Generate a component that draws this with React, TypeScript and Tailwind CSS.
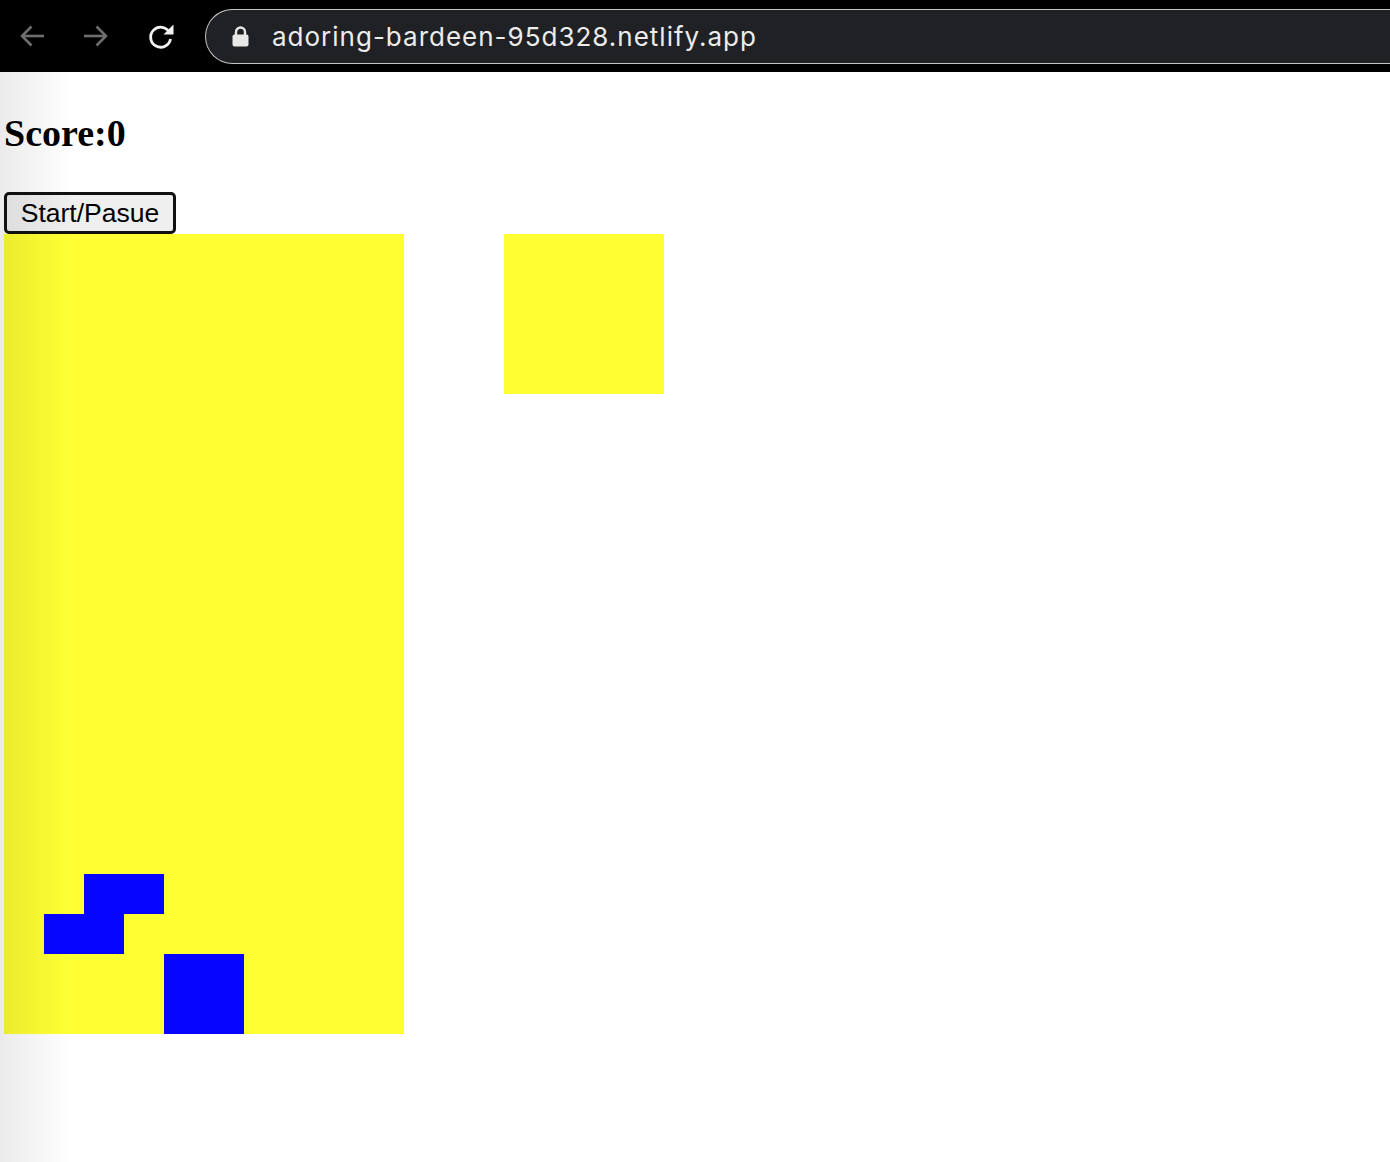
const COLS = 10;
const ROWS = 20;

// cells that are filled on the board, as [row, col]
const filled: [number, number][] = [
  [16, 2], [16, 3],
  [17, 1], [17, 2],
  [18, 4], [18, 5],
  [19, 4], [19, 5],
];

function isFilled(r: number, c: number) {
  return filled.some(([fr, fc]) => fr === r && fc === c);
}

function BrowserBar() {
  return (
    <div className="h-[72px] bg-black flex items-center">
      <div className="flex items-center pl-[19px] gap-[38px]">
        <svg width="26" height="24" viewBox="0 0 26 24" fill="none" stroke="#6e6e6e" strokeWidth="2.6" strokeLinecap="butt">
          <path d="M25 12H3" />
          <path d="M12.5 2.5L3 12l9.5 9.5" />
        </svg>
        <svg width="26" height="24" viewBox="0 0 26 24" fill="none" stroke="#6e6e6e" strokeWidth="2.6" strokeLinecap="butt">
          <path d="M1 12h22" />
          <path d="M13.5 2.5L23 12l-9.5 9.5" />
        </svg>
        <svg width="28" height="28" viewBox="0 0 28 28" fill="none">
          <path d="M22.5 10.5A10 10 0 1 0 23.5 17" stroke="#f2f2f2" strokeWidth="2.8" />
          <path d="M26.5 2.5v10h-10z" fill="#f2f2f2" />
        </svg>
      </div>
      <div className="ml-[30px] flex-1 h-[55px] rounded-l-full border border-r-0 border-[#c4c4c4] bg-[#202124] flex items-center pl-[26px]">
        <svg width="17" height="21" viewBox="0 0 17 21">
          <path d="M4 9V6a4.5 4.5 0 0 1 9 0v3" fill="none" stroke="#e8e8e8" strokeWidth="2.4" />
          <rect x="0.5" y="8.5" width="16" height="12" rx="2" fill="#e8e8e8" />
        </svg>
        <span className="ml-[23px] text-[26px] text-[#ececec] font-['Inter',sans-serif] tracking-[1px]">
          adoring-bardeen-95d328.netlify.app
        </span>
      </div>
    </div>
  );
}

export default function App() {
  return (
    <div className="relative min-h-[1162px] bg-white">
      <BrowserBar />
      <div className="px-[4px]">
        <h2 className="mt-[40px] mb-[38px] leading-[42px] text-[38px] font-bold text-black font-['Liberation_Serif',serif]">
          Score:0
        </h2>
        <button className="h-[42px] w-[172px] rounded-[5px] border-[3px] border-[#111] bg-[#efefef] text-[26.5px] leading-none text-black font-['Liberation_Sans',sans-serif]">
          Start/Pasue
        </button>
        <div className="flex items-start">
          <div className="grid grid-cols-[repeat(10,40px)] w-[400px] bg-[#ffff33]">
            {Array.from({ length: ROWS * COLS }).map((_, i) => {
              const r = Math.floor(i / COLS);
              const c = i % COLS;
              return (
                <div
                  key={i}
                  className={isFilled(r, c) ? "h-[40px] bg-[#0505ff]" : "h-[40px] bg-[#ffff33]"}
                />
              );
            })}
          </div>
          <div className="ml-[100px] w-[160px] h-[160px] bg-[#ffff33]" />
        </div>
      </div>
      <div className="pointer-events-none absolute left-0 top-[72px] bottom-0 w-[72px] bg-gradient-to-r from-black/[0.08] to-transparent" />
    </div>
  );
}
